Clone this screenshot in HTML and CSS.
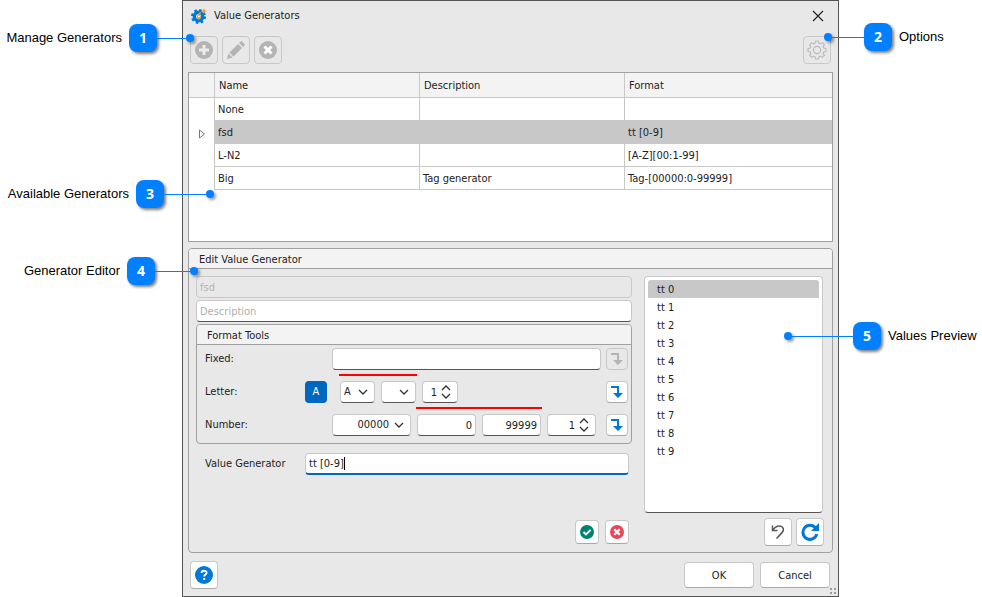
FILE: index.html
```html
<!DOCTYPE html>
<html lang="en">
<head>
    <meta charset="UTF-8">
    <meta name="viewport" content="width=device-width, initial-scale=1.0">
    <title>Value Generators</title>
    <link rel="stylesheet" href="styles.css">
</head>
<body>
    <!-- shared icons -->
    <svg class="sprite" aria-hidden="true">
        <symbol id="chevron" viewBox="0 0 10 6"><path d="M1 1l4 4 4-4" fill="none" stroke="#333" stroke-width="1.3"/></symbol>
        <symbol id="updown" viewBox="0 0 10 14"><path d="M1 5l4-4 4 4M1 9l4 4 4-4" fill="none" stroke="#333" stroke-width="1.3"/></symbol>
        <symbol id="insert" viewBox="0 0 14 14"><path d="M1 1h8v7h4l-5 5-5-5h4V3H1z" fill="currentColor"/></symbol>
        <symbol id="cross" viewBox="0 0 18 18"><circle cx="9" cy="9" r="9" fill="currentColor"/><path d="M5.5 5.5l7 7M12.5 5.5l-7 7" stroke="#fff" stroke-width="3"/></symbol>
    </svg>

    <main class="dialog">
        <header class="titlebar">
            <svg width="16" height="16" viewBox="0 0 16 16">
                <circle cx="7.5" cy="8.500" r="4.200" fill="none" stroke="#0078d7" stroke-width="3.400"/>
                <circle cx="7.5" cy="8.500" r="6.400" fill="none" stroke="#0078d7" stroke-width="2.200" stroke-dasharray="2.500 2.526"/>
                <path d="M13 0l.8 2.200L16 3l-2.200.8L13 6l-.8-2.200L10 3l2.200-.8zM9 3.500L10 5 8.800 7.500l1.400 1L8 12l-1.500-1L5.500 9 7 6.500z" fill="#f7941d"/>
                <circle cx="7.8" cy="8.500" r="1" fill="#fff"/>
            </svg>
            <h1>Value Generators</h1>
            <button class="close" aria-label="Close">
                <svg width="12" height="12" viewBox="0 0 12 12"><path d="M1 1l10 10M11 1L1 11" stroke="#222" stroke-width="1.2"/></svg>
            </button>
        </header>

        <div class="toolbar">
            <button class="tool disabled" aria-label="Add" disabled>
                <svg width="18" height="18" viewBox="0 0 18 18"><circle cx="9" cy="9" r="9" fill="#b4b4b4"/><path d="M9 4v10M4 9h10" stroke="#ececec" stroke-width="3"/></svg>
            </button>
            <button class="tool disabled" aria-label="Edit" disabled>
                <svg width="18" height="18" viewBox="0 0 18 18" fill="#b4b4b4"><path d="M0 18l1.5-5.5 4 4zM2.5 11.5L11 3l4 4-8.500 8.500zM12 2l1.500-1.500q.8-.7 1.600 0l2.400 2.400q.7.800 0 1.600L16 6z"/></svg>
            </button>
            <button class="tool disabled" aria-label="Delete" disabled>
                <svg class="gray" width="18" height="18"><use href="#cross"/></svg>
            </button>
            <button class="tool disabled options" aria-label="Options" disabled>
                <svg width="20" height="20" viewBox="0 0 20 20" fill="none" stroke="#b8b8b8" stroke-width="1.100">
                    <circle cx="10" cy="10" r="3.600"/>
                    <path d="M8.500 1h3l.5 2.300 1.400.6 2-1.300 2 2-1.300 2 .6 1.400 2.300.5v3l-2.300.5-.6 1.400 1.300 2-2 2-2-1.300-1.400.6-.5 2.300h-3L8 16.700l-1.400-.6-2 1.300-2-2 1.300-2-.6-1.400L1 11.500v-3L3.300 8l.6-1.400-1.300-2 2-2 2 1.300L8 3.300z" stroke-linejoin="round"/>
                </svg>
            </button>
        </div>

        <div class="grid">
            <table>
                <thead>
                    <tr><th class="marker"></th><th class="name">Name</th><th class="desc">Description</th><th>Format</th></tr>
                </thead>
                <tbody>
                    <tr><td class="marker"></td><td>None</td><td></td><td></td></tr>
                    <tr class="selected">
                        <td class="marker"><svg width="8" height="10" viewBox="0 0 8 10"><path d="M1.500 1v8L6.500 5z" fill="#fff" stroke="#777"/></svg></td>
                        <td>fsd</td><td></td><td>tt [0-9]</td>
                    </tr>
                    <tr><td class="marker"></td><td>L-N2</td><td></td><td>[A-Z][00:1-99]</td></tr>
                    <tr><td class="marker"></td><td>Big</td><td>Tag generator</td><td>Tag-[00000:0-99999]</td></tr>
                </tbody>
            </table>
        </div>

        <section class="group editor">
            <h2>Edit Value Generator</h2>
            <div class="editor-body">
                <div class="editor-form">
                    <input class="field" type="text" aria-label="Name" value="fsd" disabled>
                    <input class="field" type="text" aria-label="Description" placeholder="Description">

                    <section class="group tools">
                        <h2>Format Tools</h2>
                        <div class="tools-body">
                            <div class="tool-row">
                                <label class="caption" for="fixed">Fixed:</label>
                                <div class="controls"><input class="field fixed" type="text" id="fixed"></div>
                                <button class="insert disabled" aria-label="Insert fixed text" disabled><svg width="14" height="14"><use href="#insert"/></svg></button>
                            </div>
                            <div class="tool-row">
                                <label class="caption" for="letter">Letter:</label>
                                <button class="case" aria-label="Upper case">A</button>
                                <div class="controls letters">
                                    <div class="range">
                                        <div class="dropdown small">
                                            <select class="field" id="letter"><option>A</option></select>
                                            <svg width="10" height="6"><use href="#chevron"/></svg>
                                        </div>
                                        <div class="dropdown small">
                                            <select class="field" aria-label="Last letter"><option></option></select>
                                            <svg width="10" height="6"><use href="#chevron"/></svg>
                                        </div>
                                    </div>
                                    <div class="spinner narrow">
                                        <input class="field" type="number" aria-label="Letter step" value="1">
                                        <svg width="10" height="14"><use href="#updown"/></svg>
                                    </div>
                                </div>
                                <button class="insert" aria-label="Insert letter"><svg width="14" height="14"><use href="#insert"/></svg></button>
                            </div>
                            <div class="tool-row">
                                <label class="caption" for="number">Number:</label>
                                <div class="controls">
                                    <div class="dropdown large">
                                        <select class="field" id="number"><option>00000</option></select>
                                        <svg width="10" height="6"><use href="#chevron"/></svg>
                                    </div>
                                    <div class="range">
                                        <input class="field limit" type="text" aria-label="From" value="0">
                                        <input class="field limit" type="text" aria-label="To" value="99999">
                                    </div>
                                    <div class="spinner">
                                        <input class="field" type="number" aria-label="Number step" value="1">
                                        <svg width="10" height="14"><use href="#updown"/></svg>
                                    </div>
                                </div>
                                <button class="insert" aria-label="Insert number"><svg width="14" height="14"><use href="#insert"/></svg></button>
                            </div>
                        </div>
                    </section>

                    <div class="value-row">
                        <label for="value">Value Generator</label>
                        <div class="value-box">
                            <input class="field active" type="text" id="value" value="tt [0-9]">
                        </div>
                    </div>

                    <div class="confirm">
                        <button aria-label="Accept">
                            <svg width="14" height="14" viewBox="0 0 18 18"><circle cx="9" cy="9" r="9" fill="#008272"/><path d="M4.500 9l3.200 3.200 6-6" fill="none" stroke="#fff" stroke-width="2.400"/></svg>
                        </button>
                        <button aria-label="Reject"><svg class="red" width="14" height="14"><use href="#cross"/></svg></button>
                    </div>
                </div>

                <div class="preview">
                    <select size="10" aria-label="Values preview">
                        <option selected>tt 0</option>
                        <option>tt 1</option>
                        <option>tt 2</option>
                        <option>tt 3</option>
                        <option>tt 4</option>
                        <option>tt 5</option>
                        <option>tt 6</option>
                        <option>tt 7</option>
                        <option>tt 8</option>
                        <option>tt 9</option>
                    </select>
                    <div class="preview-actions">
                        <button class="tool" aria-label="Undo">
                            <svg width="14" height="16" viewBox="0 0 14 16" fill="none" stroke="#555" stroke-width="1.500"><path d="M1.500 1.500v5h5M1.500 6.500C3.500 3.500 6 2 8.500 2 11 2 12.800 4 12.300 6.500 12 8 10.500 9.500 5.500 14.500"/></svg>
                        </button>
                        <button class="tool" aria-label="Refresh">
                            <svg width="18" height="18" viewBox="0 0 18 18"><path d="M14.500 5A7 7 0 1 0 15.800 11" fill="none" stroke="#0078d7" stroke-width="3"/><path d="M18 0v8h-8z" fill="#0078d7"/></svg>
                        </button>
                    </div>
                </div>
            </div>
        </section>

        <footer class="footer">
            <button class="tool" aria-label="Help">
                <svg width="18" height="18" viewBox="0 0 18 18"><circle cx="9" cy="9" r="9" fill="#0078d7"/><path d="M6.600 7C6.600 4 11.600 4 11.600 6.800 11.600 8.600 9.200 8.600 9.200 10.600" fill="none" stroke="#fff" stroke-width="1.900"/><path d="M8.200 12h2v2h-2z" fill="#fff"/></svg>
            </button>
            <button class="action ok">OK</button>
            <button class="action">Cancel</button>
            <svg class="grip" width="7" height="6" viewBox="0 0 7 6" fill="#9a9a9a"><path d="M0 0h2v2H0zM4 0h2v2H4zM0 4h2v2H0zM4 4h2v2H4z"/></svg>
        </footer>
    </main>

    <!-- callouts that point into the dialog -->
    <div class="callout manage"><span>Manage Generators</span><b>1</b><i></i></div>
    <div class="callout available"><span>Available Generators</span><b>3</b><i></i></div>
    <div class="callout edit"><span>Generator Editor</span><b>4</b><i></i></div>
    <div class="callout right settings"><i></i><b>2</b><span>Options</span></div>
    <div class="callout right values"><i></i><b>5</b><span>Values Preview</span></div>
</body>
</html>
```
FILE: styles.css
```css
* {
    box-sizing: border-box;
}

body {
    margin: 0;
    position: relative;
    display: flex;
    min-height: 100vh;
    padding: 0 143px 0 182px;
    background-color: #ffffff;
    color: #222222;
    font-family: "DejaVu Sans Condensed", "DejaVu Sans", sans-serif;
    font-size: 11px;
    line-height: 14px;
}

.sprite {
    position: absolute;
    width: 0;
    height: 0;
}

svg {
    display: block;
    flex: none;
}

h1, h2 {
    margin: 0;
    font-size: 11px;
    font-weight: normal;
}

button, input, select {
    margin: 0;
    color: inherit;
    font: inherit;
}

button {
    display: flex;
    align-items: center;
    justify-content: center;
    padding: 0;
    background-color: #ffffff;
    border: 1px solid #c8c8c8;
    border-bottom-color: #a8a8a8;
    border-radius: 4px;
}

.dialog {
    flex: 1;
    display: flex;
    flex-direction: column;
    min-width: 0;
    padding: 0 5px;
    background-color: #e8e8e8;
    border: 1px solid #555555;
}

/* title and toolbar */
.titlebar {
    display: flex;
    align-items: center;
    gap: 7px;
    height: 28px;
    padding: 2px 9px 0 3px;
}

.close {
    margin-left: auto;
    background: none;
    border: none;
}

.toolbar {
    display: flex;
    gap: 4px;
    padding: 7px 2px 8px;
}

.tool {
    width: 28px;
    height: 28px;
}

.disabled {
    background-color: transparent;
    border-color: #c8c8c8;
    color: #b4b4b4;
}

.options {
    margin-left: auto;
}

.gray {
    color: #b4b4b4;
}

.red {
    color: #e74856;
}

/* generators table */
.grid {
    height: 170px;
    background-color: #ffffff;
    border: 1px solid #a0a0a0;
}

table {
    width: 100%;
    border-collapse: separate;
    border-spacing: 0;
    table-layout: fixed;
}

th {
    height: 25px;
    padding: 2px 4px 0;
    background-color: #f3f3f3;
    border-right: 1px solid #c8c8c8;
    border-bottom: 1px solid #c8c8c8;
    font-weight: normal;
    text-align: left;
}

td {
    height: 23px;
    padding: 2px 3px 0;
    border-right: 1px solid #c8c8c8;
    border-bottom: 1px solid #c8c8c8;
}

th:last-child, td:last-child {
    border-right: none;
}

th.marker {
    width: 26px;
}

th.name, th.desc {
    width: 205px;
}

td.marker {
    padding-left: 9px;
    border-bottom: none;
}

.selected td:not(.marker) {
    background-color: #c8c8c8;
    border-color: #c8c8c8;
}

/* titled boxes */
.group {
    border: 1px solid #a0a0a0;
    border-radius: 4px;
}

.group > h2 {
    height: 20px;
    padding: 4px 10px 0;
    background-color: #f3f3f3;
    border-bottom: 1px solid #a0a0a0;
    border-radius: 3px 3px 0 0;
}

.editor {
    flex: 1;
    display: flex;
    flex-direction: column;
    margin-top: 6px;
}

.editor-body {
    flex: 1;
    display: flex;
    gap: 12px;
    padding: 7px 8px 6px 7px;
}

.editor-form {
    flex: 1;
    display: flex;
    flex-direction: column;
    gap: 2px;
    min-width: 0;
}

.field {
    width: 100%;
    height: 22px;
    padding: 0 3px;
    background-color: #ffffff;
    border: 1px solid #c8c8c8;
    border-bottom-color: #555555;
    border-radius: 4px;
    outline: none;
}

.field:disabled {
    background-color: transparent;
    border-color: #c8c8c8;
    color: #b4b4b4;
}

.field::placeholder {
    color: #b0b0b0;
}

.field.active {
    border-bottom: 2px solid #0067c0;
}

/* format tools */
.tools-body {
    display: flex;
    flex-direction: column;
    gap: 11px;
    padding: 3px 3px 7px 8px;
}

.tool-row {
    display: grid;
    grid-template-columns: 100px 27px 1fr 22px;
    align-items: center;
}

.controls {
    grid-column: 3;
    display: flex;
    gap: 6px;
    padding-right: 5px;
}

.letters {
    padding-left: 8px;
}

.case {
    width: 22px;
    height: 22px;
    background-color: #0067c0;
    border: none;
    color: #ffffff;
}

.insert {
    grid-column: 4;
    width: 22px;
    height: 22px;
    color: #0078d7;
}

.insert.disabled {
    color: #b4b4b4;
}

.range {
    position: relative;
    display: flex;
    gap: 6px;
}

/* red line over the start and end values */
.range::before {
    content: "";
    position: absolute;
    top: -7px;
    left: -1px;
    right: -1px;
    height: 2px;
    background-color: #ff0000;
}

.dropdown, .spinner {
    position: relative;
}

.dropdown select {
    appearance: none;
}

.dropdown svg {
    position: absolute;
    top: 8px;
    right: 7px;
    pointer-events: none;
}

.small {
    width: 35px;
}

.large {
    width: 79px;
}

.large select {
    padding-right: 21px;
    text-align-last: right;
}

.limit {
    width: 59px;
    text-align: right;
}

.spinner {
    width: 49px;
}

.narrow {
    width: 36px;
}

.spinner input {
    padding-right: 20px;
    text-align: right;
    appearance: textfield;
}

.spinner input::-webkit-inner-spin-button {
    display: none;
}

.spinner svg {
    position: absolute;
    top: 4px;
    right: 7px;
    pointer-events: none;
}

.value-row {
    display: grid;
    grid-template-columns: 100px 1fr;
    align-items: center;
    padding: 7px 3px 0 9px;
}

.value-box {
    position: relative;
}

/* text cursor after the value */
.value-box::after {
    content: "";
    position: absolute;
    top: 4px;
    left: 39px;
    width: 1px;
    height: 13px;
    background-color: #000000;
}

.confirm {
    display: flex;
    justify-content: flex-end;
    gap: 6px;
    margin-top: auto;
    padding: 0 3px 2px;
}

.confirm button {
    width: 24px;
    height: 24px;
}

/* values preview */
.preview {
    display: flex;
    flex-direction: column;
    width: 180px;
}

.preview select {
    flex: 1;
    width: 179px;
    padding: 3px;
    background-color: #ffffff;
    border: 1px solid #c8c8c8;
    border-bottom-color: #555555;
    border-radius: 4px;
    outline: none;
    overflow: hidden;
}

.preview option {
    min-height: 18px;
    padding: 3px 9px 1px;
    line-height: 14px;
}

.preview option:checked {
    background: #c8c8c8 linear-gradient(#c8c8c8, #c8c8c8);
    border-radius: 3px 3px 0 0;
    color: #222222;
}

.preview-actions {
    display: flex;
    justify-content: flex-end;
    gap: 4px;
    padding-top: 5px;
}

/* dialog buttons */
.footer {
    position: relative;
    display: flex;
    align-items: center;
    gap: 6px;
    padding: 8px 3px 7px 2px;
}

.action {
    width: 70px;
    height: 26px;
    padding-top: 1px;
}

.ok {
    margin-left: auto;
}

.grip {
    position: absolute;
    right: -4px;
    bottom: 2px;
}

/* callouts */
.callout {
    position: absolute;
    display: flex;
    align-items: center;
    justify-content: flex-end;
    left: 0;
    color: #000000;
    font-family: "Liberation Sans", Arial, sans-serif;
    font-size: 13px;
    white-space: nowrap;
}

.callout b {
    width: 28px;
    margin-left: 7px;
    background-color: #0080ff;
    border-radius: 8px;
    box-shadow: 2px 2px 3px rgba(0, 0, 0, 0.5);
    color: #ffffff;
    font-family: "Noto Sans", sans-serif;
    font-size: 14px;
    line-height: 28px;
    text-align: center;
}

.callout i {
    display: flex;
    align-items: center;
    height: 9px;
}

.callout i::before {
    content: "";
    flex: 1;
    height: 1px;
    background-color: #0080ff;
}

.callout i::after {
    content: "";
    width: 8px;
    height: 8px;
    background-color: #0080ff;
    border-radius: 50%;
    box-shadow: 2px 2px 3px rgba(0, 0, 0, 0.4);
}

.callout.right {
    left: auto;
    right: 0;
    justify-content: flex-start;
}

.right b {
    margin-left: 0;
    margin-right: 7px;
}

.right i {
    flex-direction: row-reverse;
}

.manage {
    top: 24px;
    width: 194px;
}

.manage i {
    width: 37px;
}

.available {
    top: 180px;
    width: 214px;
}

.available i {
    width: 50px;
}

.edit {
    top: 257px;
    width: 198px;
}

.edit i {
    width: 43px;
}

.settings {
    top: 23px;
    width: 158px;
}

.settings i {
    width: 40px;
}

.values {
    top: 322px;
    width: 198px;
}

.values i {
    width: 69px;
}
```
